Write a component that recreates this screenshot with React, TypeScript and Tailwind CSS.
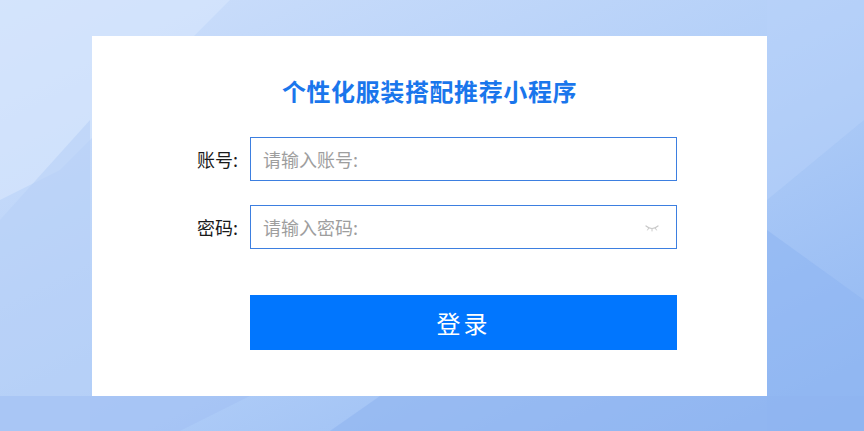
import React, { useState } from 'react';

function EyeClosed() {
  return (
    <svg width="16" height="8" viewBox="0 0 16 8" fill="none">
      <path d="M2 2 Q8 7 14 2" stroke="#c8c8c8" strokeWidth="1.2" strokeLinecap="round" />
      <path d="M4.5 4.3 L3.6 6 M8 5.3 L8 7 M11.5 4.3 L12.4 6" stroke="#c8c8c8" strokeWidth="1" strokeLinecap="round" />
    </svg>
  );
}

function Background() {
  return (
    <svg className="absolute inset-0 w-full h-full" viewBox="0 0 864 431" preserveAspectRatio="none">
      <defs>
        <linearGradient id="bg" x1="0" y1="0" x2="1" y2="1">
          <stop offset="0" stopColor="#cfe0fb" />
          <stop offset="0.5" stopColor="#b3cff8" />
          <stop offset="1" stopColor="#8fb6f2" />
        </linearGradient>
      </defs>
      <rect width="864" height="431" fill="url(#bg)" />
      <polygon points="0,0 230,0 60,170 0,200" fill="#d6e6fc" opacity="0.7" />
      <polygon points="0,220 90,120 90,431 0,431" fill="#b7d0f7" opacity="0.6" />
      <polygon points="767,0 864,0 864,120 767,200" fill="#b8d2fa" opacity="0.5" />
      <polygon points="767,230 864,300 864,431 767,431" fill="#8fb5f2" opacity="0.6" />
      <polygon points="0,396 250,396 180,431 0,431" fill="#a4c2f3" opacity="0.7" />
      <polygon points="380,396 864,396 864,431 330,431" fill="#8fb4f0" opacity="0.6" />
    </svg>
  );
}

export default function App() {
  const [account, setAccount] = useState('');
  const [password, setPassword] = useState('');

  return (
    <div
      className="relative w-[864px] h-[431px] overflow-hidden"
      style={{ fontFamily: '"Noto Sans CJK SC", "Noto Sans", sans-serif' }}
    >
      <Background />
      <div className="relative ml-[92px] pt-[36px]">
        <div className="w-[675px] h-[360px] bg-white pt-[38px]">
          <h1 className="text-center text-[24px] leading-[34px] font-bold text-[#1a76ec] tracking-[0.6px]">
            个性化服装搭配推荐小程序
          </h1>

          <div className="mt-[29px] flex items-center">
            <label className="w-[158px] shrink-0 pr-[12px] text-right text-[18px] text-[#1a1a1a]">账号:</label>
            <input
              value={account}
              onChange={(e) => setAccount(e.target.value)}
              placeholder="请输入账号:"
              className="w-[427px] h-[44px] shrink-0 border border-[#3d7fe0] px-[12px] text-[18px] text-[#333] placeholder:text-[#9e9e9e] outline-none"
            />
          </div>

          <div className="mt-[24px] flex items-center">
            <label className="w-[158px] shrink-0 pr-[12px] text-right text-[18px] text-[#1a1a1a]">密码:</label>
            <div className="relative w-[427px] h-[44px] shrink-0 border border-[#3d7fe0] flex items-center">
              <input
                type="password"
                value={password}
                onChange={(e) => setPassword(e.target.value)}
                placeholder="请输入密码:"
                className="flex-1 h-full px-[12px] text-[18px] text-[#333] placeholder:text-[#9e9e9e] outline-none"
              />
              <span className="mr-[16px] mt-[2px]">
                <EyeClosed />
              </span>
            </div>
          </div>

          <div className="mt-[46px] flex">
            <button className="ml-[158px] w-[427px] h-[55px] bg-[#0176fe] text-white text-[24px] tracking-[3px]">
              登录
            </button>
          </div>
        </div>
      </div>
    </div>
  );
}
